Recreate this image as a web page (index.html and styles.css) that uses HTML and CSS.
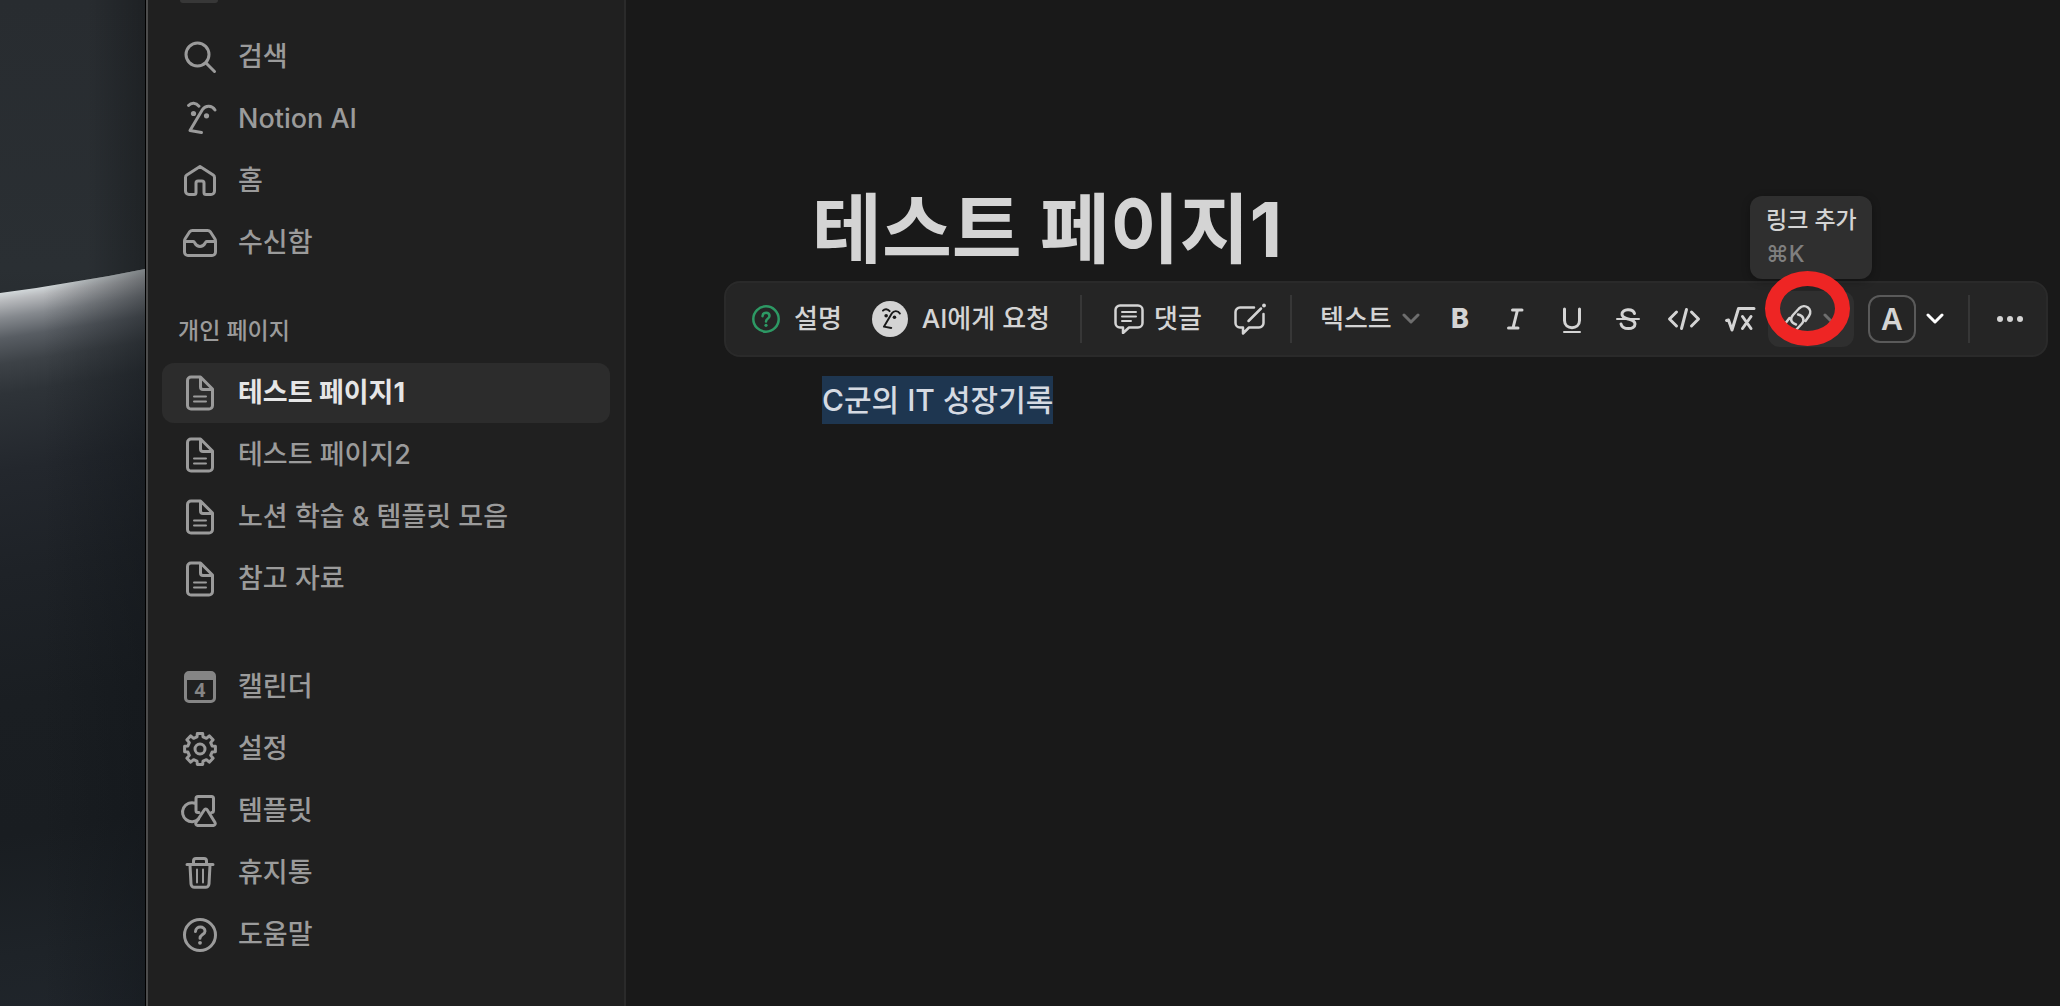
FILE: index.html
```html
<!DOCTYPE html>
<html lang="ko">
<head>
<meta charset="utf-8">
<meta name="viewport" content="width=device-width, initial-scale=1">
<title>테스트 페이지1</title>
<link rel="stylesheet" href="styles.css">
</head>
<body>
<svg class="defs" aria-hidden="true">
  <symbol id="i-doc" viewBox="0 0 40 40"><path d="M11 4h9.500l12 12v16.500a3.500 3.500 0 0 1-3.500 3.500H11a3.500 3.500 0 0 1-3.500-3.500v-25A3.500 3.500 0 0 1 11 4zM20.500 4.500V14a2.500 2.500 0 0 0 2.500 2.500h9"/><path class="thin" d="M14 23.500h12M14 28.500h12"/></symbol>
  <symbol id="i-face" viewBox="0 0 40 40"><path d="M8.500 6.500c3-3.300 7.500-2.800 10.500.7M35 11c-3-5-9.500-5-12.500-.5L10 31.500l11.500 2"/><circle class="dot" cx="13.500" cy="14.500" r="2.600"/><circle class="dot" cx="26.500" cy="16.800" r="2.600"/></symbol>
  <symbol id="i-chev" viewBox="0 0 18 12"><path d="M2 2l7 7 7-7"/></symbol>
</svg>
<div class="screen">
  <div class="wallpaper"><div class="horizon"></div></div>
  <nav class="sidebar" aria-label="사이드바">
    <div class="workspace"></div>
    <ul class="menu">
      <li><a class="item" href="#"><svg viewBox="0 0 40 40"><circle cx="17.500" cy="17.500" r="11.500"/><path d="M26 26l8.500 8.500"/></svg>검색</a></li>
      <li><a class="item" href="#"><svg><use href="#i-face"/></svg>Notion AI</a></li>
      <li><a class="item" href="#"><svg viewBox="0 0 40 40"><path d="M20 5.500L6.800 14a3 3 0 0 0-1.300 2.500V30a3.500 3.500 0 0 0 3.500 3.500h5a2 2 0 0 0 2-2V22a2 2 0 0 1 2-2h4a2 2 0 0 1 2 2v9.500a2 2 0 0 0 2 2h5a3.500 3.500 0 0 0 3.500-3.500V16.500a3 3 0 0 0-1.300-2.500z"/></svg>홈</a></li>
      <li><a class="item" href="#"><svg viewBox="0 0 40 40"><path d="M12.500 7.500h15a4 4 0 0 1 3 1.500l4.200 6.500a5 5 0 0 1 .8 2.500V29a3.500 3.500 0 0 1-3.500 3.500H8A3.500 3.500 0 0 1 4.500 29V18a5 5 0 0 1 .8-2.500L9.500 9a4 4 0 0 1 3-1.500z"/><path d="M5 18.500h8.500c1.500 0 1.500 5 6.500 5s5-5 6.500-5H35"/></svg>수신함</a></li>
    </ul>
    <h2 class="heading">개인 페이지</h2>
    <ul class="menu pages">
      <li><a class="item active" href="#" aria-current="page"><svg><use href="#i-doc"/></svg>테스트 페이지1</a></li>
      <li><a class="item" href="#"><svg><use href="#i-doc"/></svg>테스트 페이지2</a></li>
      <li><a class="item" href="#"><svg><use href="#i-doc"/></svg>노션 학습 &amp; 템플릿 모음</a></li>
      <li><a class="item" href="#"><svg><use href="#i-doc"/></svg>참고 자료</a></li>
    </ul>
    <ul class="menu">
      <li><a class="item" href="#"><svg class="cal" viewBox="0 0 40 40"><rect x="5.500" y="5.500" width="29" height="29" rx="3.500"/><path class="dot" d="M5 6h30v7H5z"/><text x="20" y="29.500">4</text></svg>캘린더</a></li>
      <li><a class="item" href="#"><svg viewBox="0 0 40 40"><circle cx="20" cy="20" r="5"/><path d="M17 7.900L17.300 4.600h5.400L23 7.900l3.400 1.400 2.900-2.400 3.800 3.800-2.400 2.900 1.400 3.400 3.300.3v5.400l-3.300.3-1.400 3.400 2.400 2.900-3.800 3.800-2.900-2.400-3.400 1.400-.3 3.300h-5.400l-.3-3.300-3.400-1.400-2.900 2.400-3.800-3.800 2.400-2.900L7.900 23l-3.300-.3v-5.400l3.300-.3 1.400-3.400-2.400-2.900 3.800-3.800 2.900 2.400z"/></svg>설정</a></li>
      <li><a class="item" href="#"><svg viewBox="0 0 40 40"><path d="M19 21.500h-1a2 2 0 0 1-2-2v-12a2 2 0 0 1 2-2h13.500a2 2 0 0 1 2 2v12a2 2 0 0 1-2 2M15 12.200a9.500 9.500 0 1 0 3.500 16"/><path d="M24.200 19L16 31.500a2 2 0 0 0 1.500 3h16a2 2 0 0 0 1.500-3L27.300 19a1.800 1.800 0 0 0-3.100 0z"/></svg>템플릿</a></li>
      <li><a class="item" href="#"><svg viewBox="0 0 40 40"><path d="M7 11.500h26M13.500 11V8a2.500 2.500 0 0 1 2.500-2.500h8A2.500 2.500 0 0 1 26.500 8v3M10 12l1 19a3.500 3.500 0 0 0 3.500 3.300h11A3.500 3.500 0 0 0 29 31l1-19"/><path class="thin" d="M17 16.500v13M23 16.500v13"/></svg>휴지통</a></li>
      <li><a class="item" href="#"><svg viewBox="0 0 40 40"><circle cx="20" cy="20" r="15.500"/><path d="M15.500 16.500c.3-6 9.500-5.700 9.500-.3 0 3.300-5 3.500-5 7"/><circle class="dot" cx="20" cy="27.800" r="1.900"/></svg>도움말</a></li>
    </ul>
  </nav>
  <main class="page">
    <h1 class="title">테스트 페이지1</h1>
    <div class="toolbar" role="toolbar" aria-label="텍스트 서식">
      <button class="tool explain" type="button"><svg viewBox="0 0 28 28"><circle cx="14" cy="14" r="12.700"/><path d="M10.500 11.200c.3-4.700 7-4.500 7-.2 0 2.600-3.500 2.700-3.500 5.500"/><circle class="dot" cx="14" cy="20.300" r="1.600"/></svg>설명</button>
      <button class="tool ask" type="button"><svg class="avatar" viewBox="0 0 36 36"><circle class="disc" cx="18" cy="18" r="18"/><g transform="translate(5.500 5.500) scale(.64)"><path d="M8.500 6.500c3-3.300 7.500-2.800 10.500.7M35 11c-3-5-9.500-5-12.500-.5L10 31.500l11.500 2"/><circle class="dot" cx="13.500" cy="14.500" r="2.800"/><circle class="dot" cx="26.500" cy="16.800" r="2.800"/></g></svg>AI에게 요청</button>
      <span class="divider"></span>
      <button class="tool comment" type="button"><svg viewBox="0 0 30 30"><path d="M6 1.500h18a4.500 4.500 0 0 1 4.500 4.500v13a4.500 4.500 0 0 1-4.500 4.500h-9L9 29v-5.500H6A4.500 4.500 0 0 1 1.500 19V6A4.500 4.500 0 0 1 6 1.500z"/><path class="thin" d="M8 8h14M8 12.500h14M8 17h9"/></svg>댓글</button>
      <button class="tool suggest" type="button" aria-label="편집 제안"><svg viewBox="0 0 32 32"><path d="M20 4.500H6A4.500 4.500 0 0 0 1.500 9v11A4.500 4.500 0 0 0 6 24.500h3v6l6-6h10a4.500 4.500 0 0 0 4.500-4.500V11M14.500 18L27 5.500"/><circle class="dot" cx="30" cy="2.500" r="1.900"/></svg></button>
      <div class="format">
        <span class="divider"></span>
        <button class="tool type" type="button">텍스트<svg class="chev" viewBox="0 0 18 12"><use href="#i-chev"/></svg></button>
        <button class="tool mark bold" type="button">B</button>
        <button class="tool mark" type="button" aria-label="기울임꼴"><svg viewBox="0 0 28 28"><path d="M10.500 5H20M6.500 23H16M15.500 5l-4.500 18"/></svg></button>
        <button class="tool mark" type="button" aria-label="밑줄"><svg viewBox="0 0 28 28"><path d="M6.500 4v11.500c0 9.500 15 9.500 15 0V4"/><path class="thin" d="M6 27h16"/></svg></button>
        <button class="tool mark" type="button" aria-label="취소선"><svg viewBox="0 0 28 28"><path d="M20.500 8.500C19 3 8 3.500 8 9.300c0 3 3 4 6 4.700s7 1.500 7 5c0 6-12.500 6.300-14 0"/><path class="thin" d="M3 14h22"/></svg></button>
        <button class="tool mark" type="button" aria-label="코드"><svg class="wide" viewBox="0 0 34 28"><path d="M9.500 7L2.500 14l7 7M24.500 7l7 7-7 7M19.500 4.500l-5 19"/></svg></button>
        <button class="tool mark" type="button" aria-label="수식"><svg class="wide" viewBox="0 0 34 28"><path d="M3.500 15.500l2-.5 3.500 10 6.500-21.500H31M19.500 11.500l8.500 12M28 11.500l-8.500 12"/></svg></button>
        <button class="tool link" type="button" aria-label="링크 추가"><svg viewBox="0 0 30 30"><path d="M13 20.500c-5-1.500-6.500-5.500-3-9.500l6-6.500c6-6 14.500 1 10 7.500L22.500 17M15 10.500c5 1 7 5 4 9L13 26c-6 6-14.500-1-10-7.500L6.500 14"/></svg><svg class="chev" viewBox="0 0 18 12"><use href="#i-chev"/></svg>
          <span class="tooltip" role="tooltip"><span>링크 추가</span><span class="keys">⌘K</span></span><span class="ring"></span></button>
        <button class="tool color" type="button" aria-label="텍스트 색"><span class="swatch">A</span><svg class="chev" viewBox="0 0 18 12"><use href="#i-chev"/></svg></button>
        <span class="divider"></span>
        <button class="tool more" type="button" aria-label="더 보기"><svg viewBox="0 0 28 8"><circle cx="4" cy="4" r="3"/><circle cx="14" cy="4" r="3"/><circle cx="24" cy="4" r="3"/></svg></button>
      </div>
    </div>
    <p class="block"><mark>C군의 IT 성장기록</mark></p>
  </main>
</div>
</body>
</html>
```
FILE: styles.css
```css
* { box-sizing: border-box; }
body {
  margin: 0;
  background: #191919;
  color: #d4d4d4;
  font: 500 27px/32px Inter, "Noto Sans CJK KR", sans-serif;
}
.defs { position: absolute; width: 0; height: 0; }
svg { flex: none; fill: none; stroke: currentColor; stroke-width: 3; stroke-linecap: round; stroke-linejoin: round; }
.thin { stroke-width: 2; }
.dot { fill: currentColor; stroke: none; }
.screen { display: flex; min-height: 100vh; }

.wallpaper {
  display: flex; flex-direction: column;
  flex: 0 0 146px;
  padding-top: 269px;
  border-right: 1px solid #000;
  background: linear-gradient(90deg, transparent 60%, rgba(0, 0, 0, .25)), linear-gradient(#282c30, #2a2f33 269px, #1a1c20 600px);
}
.horizon {
  flex: 1;
  clip-path: polygon(0 24px, 25% 19px, 50% 13px, 75% 7px, 100% 0, 100% 100%, 0 100%);
  background: linear-gradient(90deg, transparent 30%, rgba(16, 20, 24, .45)), linear-gradient(171deg, #d2d8da 24px, #b8babd 32px, #85898e 49px, #585d63 69px, #3d4247 94px, #2e3338 124px, #23272d 200px, #1e2227 300px, #1a1e22 430px, #191d21 560px, #1e2328 680px, #20252b 750px);
}

.sidebar {
  flex: 0 0 480px;
  padding: 0 14px;
  border-left: 2px solid #4c4c4c;
  border-right: 2px solid #2a2a2a;
  background: #202020;
}
.workspace { width: 38px; height: 3px; margin-left: 18px; border-radius: 0 0 8px 8px; background: #373737; }
.menu { display: flex; flex-direction: column; gap: 2px; margin: 24px 0 0; padding: 0; list-style: none; }
.item {
  display: flex; align-items: center; gap: 18px;
  height: 60px; padding-left: 18px; border-radius: 12px;
  color: #9b9b9b; text-decoration: none;
}
.item svg { width: 40px; height: 40px; }
.item.active { background: #2c2c2c; color: #e6e6e6; font-weight: 700; }
.item.active svg { color: #9b9b9b; }
.item .cal { color: #858585; }
.cal text { fill: currentColor; stroke: none; font: 700 19px "Open Sans", sans-serif; text-anchor: middle; }
.heading { margin: 42px 0 0 16px; color: #9b9b9b; font-size: 23px; font-weight: 500; line-height: 32px; }
.pages { margin: 16px 0 48px; }

.page { flex: 1; min-width: 0; padding: 181px 12px 0 98px; }
.title { margin: 0 0 4px 88px; font-size: 76px; font-weight: 700; line-height: 96px; }
.toolbar {
  display: flex; align-items: center;
  height: 76px; padding-left: 26px;
  border: 2px solid #2a2a2a; border-radius: 16px;
  background: #252525;
  font-size: 26px;
}
.tool {
  position: relative; display: flex; align-items: center; flex: none;
  height: 56px; padding: 0; border: 0; border-radius: 12px;
  background: none; color: inherit; font: inherit; line-height: 32px;
}
.explain { gap: 14px; }
.explain svg { width: 28px; height: 28px; color: #2d9964; stroke-width: 2.500; }
.ask { gap: 14px; margin-left: 30px; }
.avatar { width: 36px; height: 36px; color: #191919; }
.disc { fill: #d4d4d4; stroke: none; }
.divider { flex: none; width: 2px; height: 48px; background: #373737; }
.ask + .divider { margin: 0 32px 0 30px; }
.comment { gap: 10px; }
.comment svg { width: 30px; height: 30px; stroke-width: 2.500; }
.suggest { margin-left: 32px; }
.suggest svg { width: 32px; height: 32px; stroke-width: 2.500; }
.format { display: flex; align-items: center; margin-left: auto; }
.type { gap: 10px; width: 140px; padding-left: 28px; }
.chev { width: 18px; height: 12px; color: #6e6e6e; }
.mark { justify-content: center; width: 56px; }
.mark svg { width: 28px; height: 28px; }
.mark .wide { width: 34px; }
.bold { font-weight: 800; font-size: 27px; }
.link { gap: 10px; width: 86px; padding-left: 15px; background: #2f2f2f; }
.link > svg:first-child { width: 30px; height: 30px; stroke-width: 2.500; }
.ring { position: absolute; left: -3px; top: -20px; width: 85px; height: 75px; border: 15px solid #ee2524; border-radius: 50%; }
.tooltip {
  position: absolute; left: -18px; top: -95px;
  display: flex; flex-direction: column; gap: 2px;
  width: 122px; padding: 8px 0 9px 16px;
  border-radius: 12px; background: #2f2f2f;
  font-size: 23px; text-align: left; white-space: nowrap;
  box-shadow: 0 2px 8px rgba(0, 0, 0, .3);
}
.keys { color: #7f7f7f; }
.color { gap: 10px; margin: 0 24px 0 14px; }
.color .chev { color: #fff; }
.swatch { width: 48px; height: 48px; border: 2px solid #5a5a5a; border-radius: 12px; font-size: 30px; font-weight: 600; line-height: 44px; text-align: center; }
.more { justify-content: center; width: 68px; margin: 0 2px 0 6px; }
.more svg { width: 28px; height: 8px; fill: currentColor; stroke: none; }
.block { margin: 19px 0 0 98px; font-size: 30px; line-height: 48px; font-weight: 500; }
.block mark { display: inline-block; background: #1e3650; color: #d5dae2; }
```
